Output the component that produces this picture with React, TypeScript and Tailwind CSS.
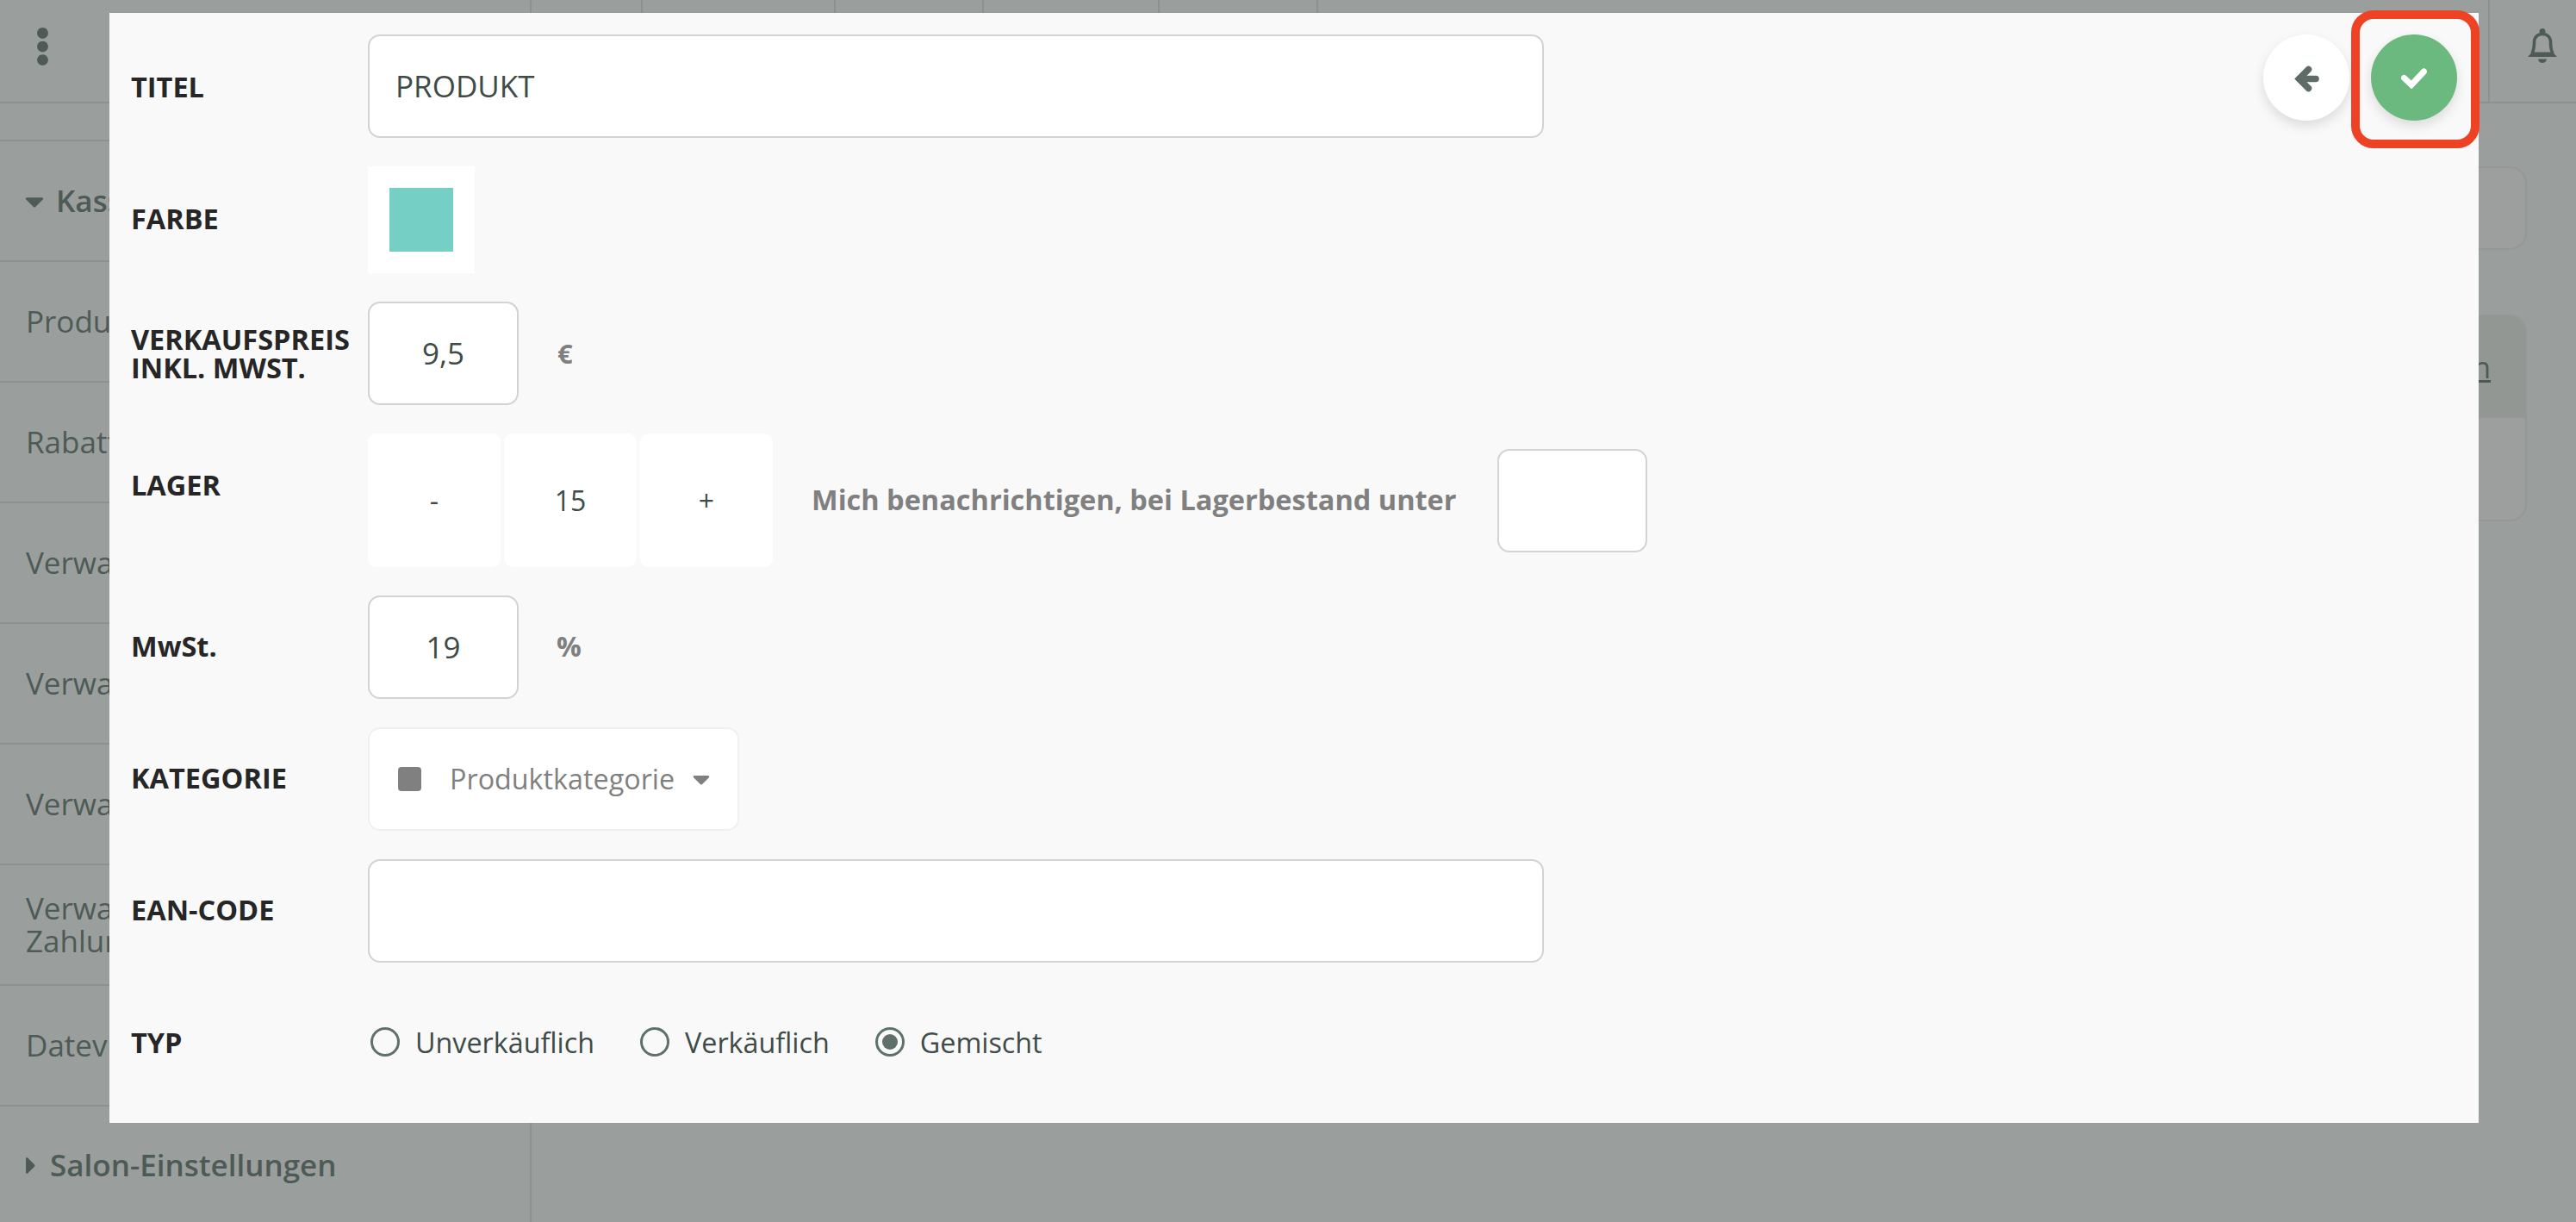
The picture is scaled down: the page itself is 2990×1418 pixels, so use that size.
import { FaCaretDown, FaCaretRight, FaEllipsisV } from "react-icons/fa";

const topCells = ["w-[129px]", "w-[224px]", "w-[172px]", "w-[204px]", "w-[184px]"];

function SideRow({ children, tall }: { children: React.ReactNode; tall?: boolean }) {
  return (
    <div className={`h-[140px] shrink-0 border-b-2 border-[#8e928f] flex items-center pl-[30px] pr-4 text-[35px] text-[#4d5a55] ${tall ? "leading-[38px]" : "leading-[44px]"}`}>
      <span>{children}</span>
    </div>
  );
}

function Label({ children, className = "" }: { children: React.ReactNode; className?: string }) {
  return <div className={`w-[300px] shrink-0 pl-[25px] text-[32.5px] leading-[33px] font-bold text-[#262626] ${className}`}>{children}</div>;
}

function Field({ className = "", children }: { className?: string; children?: React.ReactNode }) {
  return (
    <div className={`h-[120px] bg-white border-2 border-[#d0d4d2] rounded-[14px] flex items-center text-[35px] text-[#3e4b47] ${className}`}>
      {children}
    </div>
  );
}

function Stepper({ children }: { children: React.ReactNode }) {
  return <div className="w-[154px] h-full bg-white rounded-[10px] flex items-center justify-center text-[32px] text-[#3e4b47]">{children}</div>;
}

function Radio({ label, checked }: { label: string; checked?: boolean }) {
  return (
    <div className="flex items-center">
      <span className="w-[34px] h-[34px] rounded-full border-[3px] border-[#5f6f6a] flex items-center justify-center">
        {checked && <span className="w-[18px] h-[18px] rounded-full bg-[#5f6f6a]" />}
      </span>
      <span className="ml-[18px] text-[32.3px] leading-[40px] text-[#3e4b47]">{label}</span>
    </div>
  );
}

function Bell() {
  return (
    <svg viewBox="0 0 34 40" className="w-[34px] h-[40px]" fill="currentColor">
      <circle cx="17" cy="3.5" r="3.5" />
      <path d="M5 29 C7 25 7.5 21 7.5 16 C7.5 10 11.5 6.5 17 6.5 C22.5 6.5 26.5 10 26.5 16 C26.5 21 27 25 29 29" fill="none" stroke="currentColor" strokeWidth="3.6" />
      <path d="M0 33 L5 27.5 H29 L34 33 Z" />
      <path d="M12 35.5 H22 C21.5 38.5 19.5 40 17 40 C14.5 40 12.5 38.5 12 35.5 Z" />
    </svg>
  );
}

function BackArrow() {
  return (
    <svg viewBox="0 0 29 31" className="w-[29px] h-[31px] mt-[3px]" fill="none" stroke="currentColor" strokeWidth="7.5" strokeLinecap="round">
      <path d="M25 15.5 H6" />
      <path d="M16.5 4.5 L5.5 15.5 L16.5 26.5" />
    </svg>
  );
}

function CheckMark() {
  return (
    <svg viewBox="0 0 30 24" className="w-[30px] h-[24px] mt-[2px]" fill="none" stroke="currentColor" strokeWidth="7" strokeLinecap="round">
      <path d="M3.5 11.5 L12 19.5 L26.5 4" />
    </svg>
  );
}

export default function App() {
  return (
    <div className="relative w-[2990px] h-[1418px] overflow-hidden bg-[#9a9e9c] font-['Open_Sans',sans-serif]">
      <div className="flex h-full">
        <aside className="w-[617px] shrink-0 border-r-2 border-[#8e928f] flex flex-col">
          <div className="h-[120px] shrink-0 border-b-2 border-[#8e928f] pl-[41px] pt-[31px] text-[#4d5a55]">
            <FaEllipsisV className="w-[17px] h-[46px]" />
          </div>
          <div className="h-[44px] shrink-0 border-b-2 border-[#8e928f]" />
          <div className="h-[140px] shrink-0 border-b-2 border-[#8e928f] flex items-center pl-[29px] font-semibold text-[35px] text-[#4d5a55]">
            <FaCaretDown className="w-[22px] h-[35px] mr-[14px] shrink-0" />
            <span>Kasse</span>
          </div>
          <SideRow>Produkte</SideRow>
          <SideRow>Rabatte</SideRow>
          <SideRow>Verwaltung</SideRow>
          <SideRow>Verwaltung</SideRow>
          <SideRow>Verwaltung</SideRow>
          <SideRow tall>Verwaltung<br />Zahlungen</SideRow>
          <SideRow>Datev</SideRow>
          <div className="flex items-center h-[140px] pt-[3px] pl-[30px] font-semibold text-[35px] text-[#4d5a55]">
            <FaCaretRight className="w-[12px] h-[33px] mr-[16px] shrink-0" />
            <span>Salon-Einstellungen</span>
          </div>
        </aside>
        <main className="flex-1 flex flex-col min-w-0">
          <div className="h-[120px] shrink-0 border-b-2 border-[#8e928f] flex">
            {topCells.map((w) => (
              <div key={w} className={`${w} shrink-0 border-r-2 border-[#8e928f]`} />
            ))}
            <div className="flex-1" />
            <div className="w-[102px] shrink-0 border-l-2 border-[#8e928f] pl-[44px] pt-[33px] text-[#4d5a55]">
              <Bell />
            </div>
          </div>
          <div className="mt-[73px] mr-[57px] h-[97px] rounded-[20px] border-2 border-[#949896] bg-[#9c9f9d]" />
          <div className="mt-[75px] mr-[57px] h-[240px] rounded-[20px] border-2 border-[#949896] bg-[#9c9f9d] overflow-hidden">
            <div className="h-[118px] bg-[#929794] flex items-center justify-end pr-[40px] text-[34px] text-[#4d5a55] underline">Aktionen</div>
          </div>
        </main>
      </div>

      <div className="absolute left-[127px] top-[15px] w-[2750px] h-[1288px] bg-[#f9f9f9] pt-[25px] flex flex-col gap-[33px]">
        <div className="flex items-center">
          <Label>TITEL</Label>
          <Field className="w-[1365px] pl-[30px]">PRODUKT</Field>
        </div>
        <div className="flex items-center">
          <Label className="-mt-[3px]">FARBE</Label>
          <div className="w-[124px] h-[124px] bg-white flex items-center justify-center">
            <div className="w-[74px] h-[74px] bg-[#75cfc4]" />
          </div>
        </div>
        <div className="flex items-center">
          <Label>VERKAUFSPREIS<br />INKL. MWST.</Label>
          <Field className="w-[175px] justify-center">9,5</Field>
          <span className="ml-[45px] text-[31px] font-bold text-[#808080]">€</span>
        </div>
        <div className="flex items-center">
          <Label className="-mt-[36px]">LAGER</Label>
          <div className="flex gap-[4px] h-[155px]">
            <Stepper>-</Stepper>
            <Stepper>15</Stepper>
            <Stepper>+</Stepper>
          </div>
          <span className="ml-[45px] text-[32.5px] font-bold text-[#808080]">Mich benachrichtigen, bei Lagerbestand unter</span>
          <Field className="w-[174px] ml-[47px]" />
        </div>
        <div className="flex items-center">
          <Label className="-mt-[3px]">MwSt.</Label>
          <Field className="w-[175px] justify-center">19</Field>
          <span className="ml-[44px] -mt-[2px] text-[32px] font-bold text-[#808080]">%</span>
        </div>
        <div className="flex items-center">
          <Label className="-mt-[3px]">KATEGORIE</Label>
          <div className="w-[431px] h-[120px] bg-white border-2 border-[#f0f0f0] rounded-[14px] flex items-center pl-[33px]">
            <span className="w-[27px] h-[28px] rounded-[4px] bg-[#808080] shrink-0" />
            <span className="ml-[33px] -mt-[2px] text-[32.3px] text-[#808080]">Produktkategorie</span>
            <FaCaretDown className="ml-[21px] w-[20px] h-[32px] text-[#808080] shrink-0" />
          </div>
        </div>
        <div className="flex items-center">
          <Label className="-mt-[3px]">EAN-CODE</Label>
          <Field className="w-[1365px]" />
        </div>
        <div className="flex items-center mt-[39px]">
          <Label>TYP</Label>
          <div className="flex items-center gap-[53px] pl-[3px]">
            <Radio label="Unverkäuflich" />
            <Radio label="Verkäuflich" />
            <Radio label="Gemischt" checked />
          </div>
        </div>
        <div className="absolute right-[25px] top-[25px] flex gap-[25px]">
          <button className="w-[100px] h-[100px] rounded-full bg-white shadow-[0_6px_14px_rgba(0,0,0,0.12)] flex items-center justify-center text-[#5f6b67]">
            <BackArrow />
          </button>
          <button className="w-[100px] h-[100px] rounded-full bg-[#6bb97f] shadow-[0_6px_14px_rgba(0,0,0,0.12)] flex items-center justify-center text-white">
            <CheckMark />
          </button>
        </div>
      </div>

      <div className="absolute left-[2729px] top-[12px] w-[149px] h-[160px] rounded-[26px] border-[10px] border-[#ee4225]" />
    </div>
  );
}
